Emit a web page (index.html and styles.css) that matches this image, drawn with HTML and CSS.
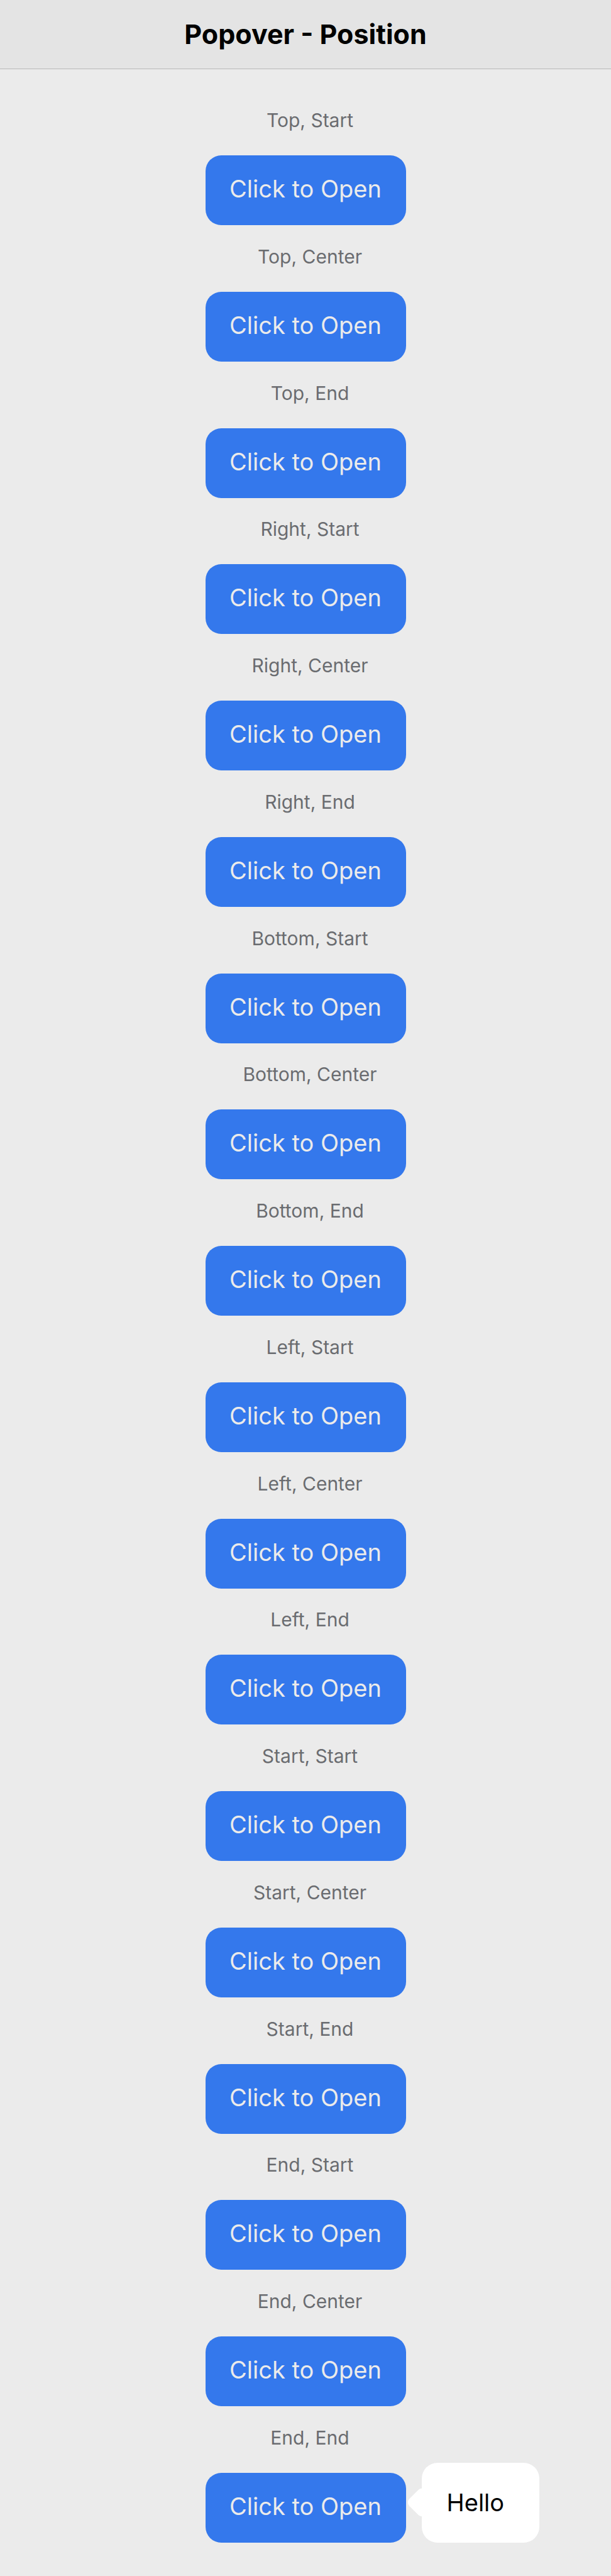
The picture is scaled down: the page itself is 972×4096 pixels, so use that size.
FILE: index.html
```html
<!DOCTYPE html>
<html lang="en">
<head>
<meta charset="utf-8">
<meta name="viewport" content="width=device-width, initial-scale=1">
<title>Popover - Position</title>
<link rel="stylesheet" href="styles.css">
</head>
<body>
<header class="header"><h1 class="title">Popover - Position</h1></header>
<main class="grid">
<section class="item"><p class="label" id="l1">Top, Start</p><button class="button" aria-describedby="l1">Click to Open</button></section>
<section class="item"><p class="label" id="l2">Top, Center</p><button class="button" aria-describedby="l2">Click to Open</button></section>
<section class="item"><p class="label" id="l3">Top, End</p><button class="button" aria-describedby="l3">Click to Open</button></section>
<section class="item"><p class="label" id="l4">Right, Start</p><button class="button" aria-describedby="l4">Click to Open</button></section>
<section class="item"><p class="label" id="l5">Right, Center</p><button class="button" aria-describedby="l5">Click to Open</button></section>
<section class="item"><p class="label" id="l6">Right, End</p><button class="button" aria-describedby="l6">Click to Open</button></section>
<section class="item"><p class="label" id="l7">Bottom, Start</p><button class="button" aria-describedby="l7">Click to Open</button></section>
<section class="item"><p class="label" id="l8">Bottom, Center</p><button class="button" aria-describedby="l8">Click to Open</button></section>
<section class="item"><p class="label" id="l9">Bottom, End</p><button class="button" aria-describedby="l9">Click to Open</button></section>
<section class="item"><p class="label" id="l10">Left, Start</p><button class="button" aria-describedby="l10">Click to Open</button></section>
<section class="item"><p class="label" id="l11">Left, Center</p><button class="button" aria-describedby="l11">Click to Open</button></section>
<section class="item"><p class="label" id="l12">Left, End</p><button class="button" aria-describedby="l12">Click to Open</button></section>
<section class="item"><p class="label" id="l13">Start, Start</p><button class="button" aria-describedby="l13">Click to Open</button></section>
<section class="item"><p class="label" id="l14">Start, Center</p><button class="button" aria-describedby="l14">Click to Open</button></section>
<section class="item"><p class="label" id="l15">Start, End</p><button class="button" aria-describedby="l15">Click to Open</button></section>
<section class="item"><p class="label" id="l16">End, Start</p><button class="button" aria-describedby="l16">Click to Open</button></section>
<section class="item"><p class="label" id="l17">End, Center</p><button class="button" aria-describedby="l17">Click to Open</button></section>
<section class="item"><p class="label" id="l18">End, End</p><div class="anchor"><button class="button" aria-describedby="l18" aria-expanded="true">Click to Open</button><div class="popover" role="dialog" aria-label="Hello">Hello</div></div></section>
</main>
</body>
</html>
```
FILE: styles.css
```css
* {
  box-sizing: border-box;
}

body {
  display: flex;
  flex-direction: column;
  min-height: 100vh;
  margin: 0;
  background: #ebebeb;
  font-family: Inter, Roboto, sans-serif;
}

.header {
  padding: 29px 24px;
  border-bottom: 1px solid #b8b8b8;
  background: #e4e4e4;
}

.title {
  margin: 0;
  color: #000;
  font-size: 43px;
  font-weight: 700;
  line-height: 51px;
  text-align: center;
}

.grid {
  display: flex;
  flex: 1;
  flex-direction: column;
  align-items: center;
  justify-content: space-between;
  padding: 63px 24px 53px;
}

.item {
  display: flex;
  flex-direction: column;
  align-items: center;
  gap: 38px;
}

.label {
  margin: 0;
  padding-left: 14px;
  color: #6a6c70;
  font-size: 30px;
  line-height: 36px;
}

.button {
  min-width: 319px;
  padding: 29px 32px 33px;
  border: 0;
  border-radius: 25px;
  background: #3478ec;
  color: #ebebeb;
  font-family: inherit;
  font-size: 38px;
  line-height: 49px;
  white-space: nowrap;
  cursor: pointer;
}

.anchor {
  position: relative;
  display: flex;
}

.popover {
  position: absolute;
  bottom: 0;
  left: calc(100% + 25px);
  min-width: 187px;
  padding: 39px 40px;
  border-radius: 25px;
  background: #fff;
  color: #000;
  font-size: 38px;
  line-height: 49px;
}

.popover::before {
  content: "";
  position: absolute;
  top: calc(50% - 18px);
  left: -18px;
  width: 36px;
  height: 36px;
  border-radius: 8px;
  background: #fff;
  transform: rotate(45deg);
}
```
